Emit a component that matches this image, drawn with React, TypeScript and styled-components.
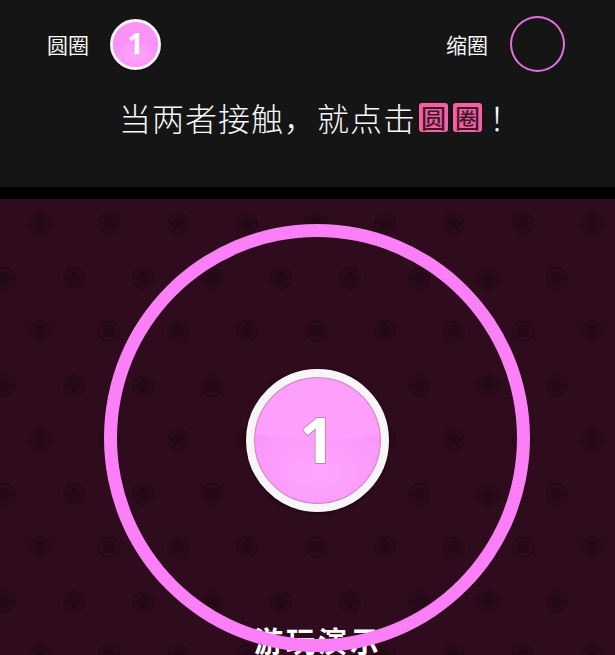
import React from "react";
import styled, { createGlobalStyle } from "styled-components";

const Global = createGlobalStyle`
  html, body { margin: 0; padding: 0; height: 100%; background: #000; overflow: hidden; }
  #root { height: 100%; }
`;

const cjk = `"Noto Sans CJK SC", "Noto Sans", sans-serif`;

const Page = styled.div`
  width: 615px;
  height: 655px;
  display: flex;
  flex-direction: column;
  overflow: hidden;
  background: #000;
  font-family: ${cjk};
  color: #f8f8f8;
`;

const Header = styled.header`
  height: 187px;
  flex: none;
  background: #151515;
  box-sizing: border-box;
  padding-top: 15px;
`;

const Legend = styled.div`
  height: 58px;
  display: flex;
  align-items: center;
  justify-content: space-between;
  padding: 0 50px 0 47px;
`;

const LegendItem = styled.div`
  display: flex;
  align-items: center;
  gap: ${(p: { $gap: number }) => p.$gap}px;
`;

const LegendLabel = styled.span`
  font-size: 21px;
  line-height: 30px;
  font-weight: 400;
`;

const MiniBall = styled.div`
  width: 51px;
  height: 51px;
  box-sizing: border-box;
  border-radius: 50%;
  border: 3px solid #f6f1f6;
  background: radial-gradient(ellipse 110% 50% at 50% 0%, #fb93f7 0 99%, transparent 100%),
    radial-gradient(ellipse 60% 40% at 50% 72%, #ffa6fd 0%, rgba(255,166,253,0) 100%),
    #f98cf5;
  display: flex;
  align-items: center;
  justify-content: center;
  box-shadow: 0 1px 2px rgba(0, 0, 0, 0.5);
`;

const MiniDigit = styled.span`
  font-family: "Open Sans", sans-serif;
  font-weight: 700;
  font-size: 28px;
  line-height: 1;
  color: #fff;
  margin-top: -2px;
`;

const MiniRing = styled.div`
  width: 55px;
  height: 56px;
  box-sizing: border-box;
  border-radius: 50%;
  border: 2px solid #e56fe1;
`;

const Message = styled.div`
  margin-top: 22px;
  margin-left: 119px;
  display: flex;
  align-items: center;
  font-size: 32px;
  line-height: 44px;
  font-weight: 300;
  letter-spacing: 1px;
  white-space: nowrap;
`;

const Chip = styled.span`
  width: 29px;
  height: 29px;
  margin-left: ${(p: { $left: number }) => p.$left}px;
  border-radius: 3px;
  background: #f65fa0;
  color: #3b1a2b;
  font-size: 25px;
  line-height: 28px;
  font-weight: 500;
  letter-spacing: 0;
  text-align: center;
`;

const Bang = styled.span`
  margin-left: 7px;
`;

const Game = styled.main`
  position: relative;
  flex: none;
  height: 456px;
  margin-top: 12px;
  overflow: hidden;
  display: flex;
  justify-content: center;
  padding-top: 25px;
  box-sizing: border-box;
  background-color: #2f0c1d;
  background-image:
    radial-gradient(circle at 50% 50%, #230815 0 6px, #2c0a1b 6.5px 8.5px, #260818 9px 10.5px, #2b0a1a 11px 11.5px, transparent 12px),
    radial-gradient(circle at 50% 50%, #230815 0 6px, #2c0a1b 6.5px 8.5px, #260818 9px 10.5px, #2b0a1a 11px 11.5px, transparent 12px);
  background-size: 69px 108px;
  background-position: 5.5px -30px, -29.5px 25px;
`;

const Caption = styled.div`
  position: absolute;
  top: 424px;
  left: 254px;
  font-size: 29px;
  line-height: 34px;
  font-weight: 700;
  letter-spacing: 3px;
  color: #fff;
  white-space: nowrap;
`;

const Ring = styled.div`
  position: relative;
  width: 426px;
  height: 428px;
  margin-left: 19px;
  box-sizing: border-box;
  border-radius: 50%;
  border: 13px solid #fb80f8;
  display: flex;
  align-items: center;
  justify-content: center;
  flex: none;
`;

const Ball = styled.div`
  width: 143px;
  height: 143px;
  box-sizing: border-box;
  border-radius: 50%;
  border: 8px solid #f7f5f7;
  background: radial-gradient(ellipse 110% 50% at 50% 0%, #fe9ffc 0 99%, transparent 100%),
    radial-gradient(ellipse 62% 42% at 50% 75%, #ffa6fd 0%, rgba(255,166,253,0) 100%),
    #fb96f9;
  display: flex;
  align-items: center;
  justify-content: center;
  margin-top: 4px;
  box-shadow: 0 1px 3px rgba(0, 0, 0, 0.6), inset 0 0 1px 1px #b98fb4;
`;

const Digit = styled.span`
  font-family: "Open Sans", sans-serif;
  font-weight: 700;
  font-size: 62px;
  line-height: 1;
  color: #fff;
  -webkit-text-stroke: 1.5px #a77aa3;
  paint-order: stroke fill;
  margin-top: -2px;
`;

export default function App() {
  return (
    <Page>
      <Global />
      <Header>
        <Legend>
          <LegendItem $gap={21}>
            <LegendLabel>圆圈</LegendLabel>
            <MiniBall>
              <MiniDigit>1</MiniDigit>
            </MiniBall>
          </LegendItem>
          <LegendItem $gap={22}>
            <LegendLabel>缩圈</LegendLabel>
            <MiniRing />
          </LegendItem>
        </Legend>
        <Message>
          当两者接触，就点击
          <Chip $left={3}>圆</Chip>
          <Chip $left={5}>圈</Chip>
          <Bang>！</Bang>
        </Message>
      </Header>
      <Game>
        <Caption>游玩演示</Caption>
        <Ring>
          <Ball>
            <Digit>1</Digit>
          </Ball>
        </Ring>
      </Game>
    </Page>
  );
}
